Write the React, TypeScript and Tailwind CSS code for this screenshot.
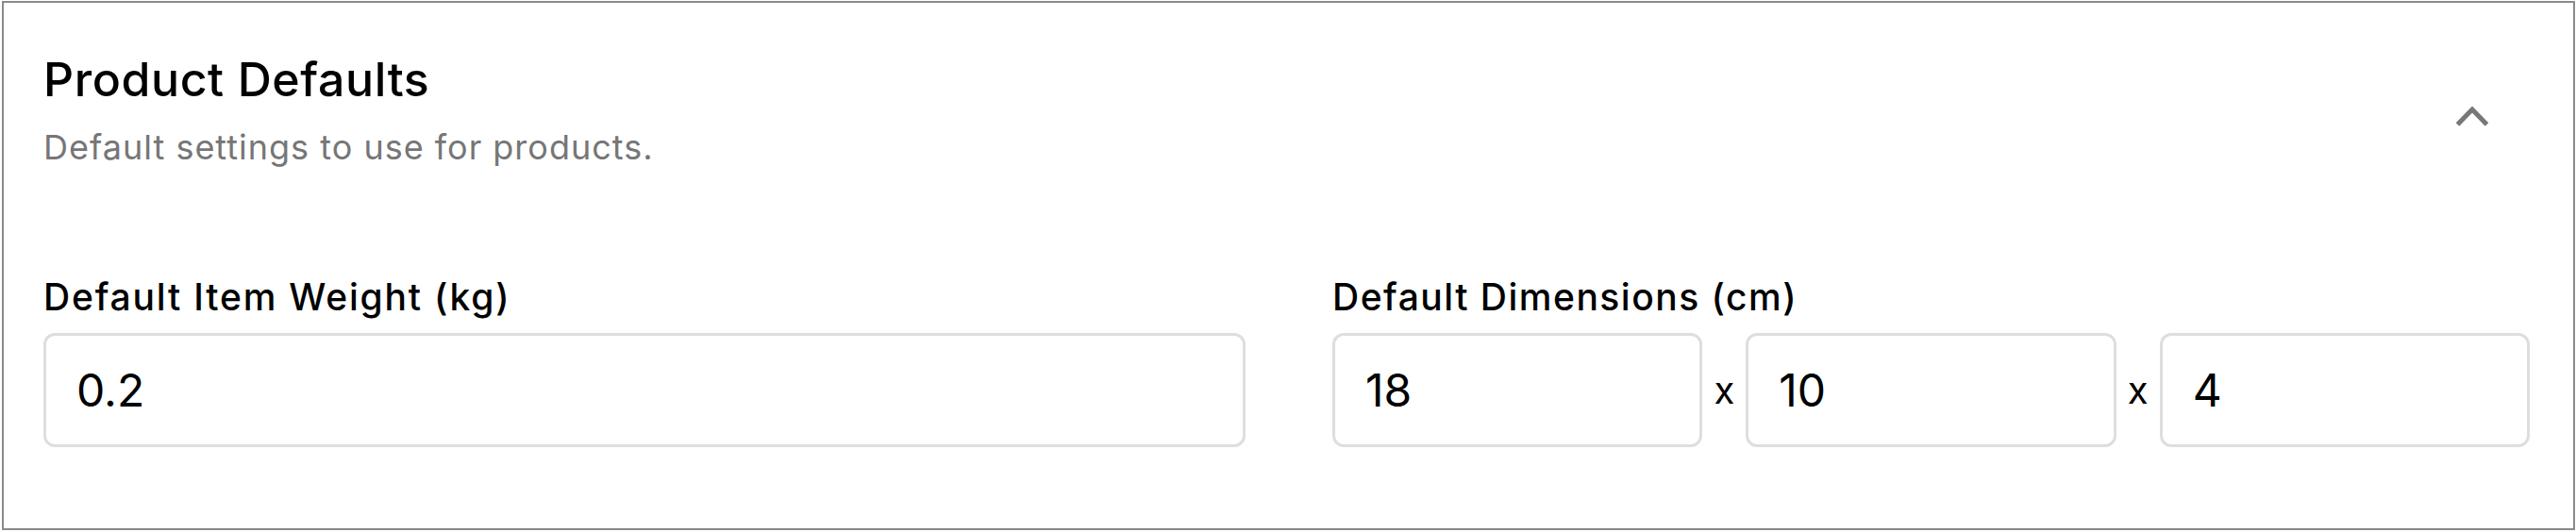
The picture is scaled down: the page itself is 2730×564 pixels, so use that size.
import { useState } from "react";

function Field({ value, className = "" }: { value: string; className?: string }) {
  const [val, setVal] = useState(value);
  return (
    <input
      value={val}
      onChange={(e) => setVal(e.target.value)}
      className={`h-[121px] w-0 min-w-0 rounded-[12px] border-[3px] border-[#dedede] bg-white px-[32px] text-[48px] text-black outline-none ${className}`}
    />
  );
}

export default function App() {
  const [open, setOpen] = useState(true);

  return (
    <div className="h-[564px] w-full bg-white pt-px pl-[2px] pr-px pb-[2px] font-['Inter',sans-serif]">
      <div className="h-full border-2 border-[#8a8a8a] pt-[51px] pl-[42px] pr-[46px]">
        {/* header */}
        <div className="flex items-start justify-between">
          <div>
            <div className="text-[50px] leading-[60px] font-medium tracking-[0.6px] text-black">Product Defaults</div>
            <div className="mt-[20px] text-[36px] leading-[44px] tracking-[1px] text-[#767676]">Default settings to use for products.</div>
          </div>
          <button
            className="mt-[50px] mr-[41px] h-[40px] w-[40px]"
            onClick={() => setOpen(!open)}
          >
            <svg viewBox="0 0 40 40" width="40" height="40">
              <polyline
                points="4.5,28 20,12 35.5,28"
                fill="none"
                stroke="#777"
                strokeWidth="5"
                strokeLinecap="butt"
                strokeLinejoin="miter"
              />
            </svg>
          </button>
        </div>

        {open && (
          <div className="mt-[113px] grid grid-cols-[1274px_minmax(0,1fr)] gap-x-[92px]">
            <div className="flex min-w-0 flex-col">
              <label className="mb-[14px] text-[39px] leading-[48px] font-medium tracking-[1.8px] text-black">Default Item Weight (kg)</label>
              <Field value="0.2" className="w-full" />
            </div>
            <div className="flex min-w-0 flex-col">
              <label className="mb-[14px] text-[39px] leading-[48px] font-medium tracking-[1.5px] text-black">Default Dimensions (cm)</label>
              <div className="flex w-full items-center">
                <Field value="18" className="flex-1" />
                <span className="w-[46px] shrink-0 text-center text-[40px] text-black">x</span>
                <Field value="10" className="flex-1" />
                <span className="w-[46px] shrink-0 text-center text-[40px] text-black">x</span>
                <Field value="4" className="flex-1" />
              </div>
            </div>
          </div>
        )}
      </div>
    </div>
  );
}
